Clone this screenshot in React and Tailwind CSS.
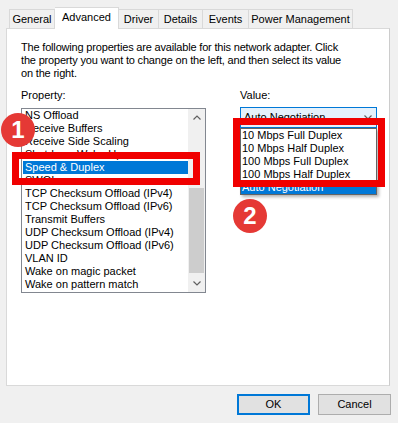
const props = [
  "NS Offload",
  "Receive Buffers",
  "Receive Side Scaling",
  "Shutdown Wake-Up",
  "Speed & Duplex",
  "SWOI",
  "TCP Checksum Offload (IPv4)",
  "TCP Checksum Offload (IPv6)",
  "Transmit Buffers",
  "UDP Checksum Offload (IPv4)",
  "UDP Checksum Offload (IPv6)",
  "VLAN ID",
  "Wake on magic packet",
  "Wake on pattern match",
];

const vals = [
  "10 Mbps Full Duplex",
  "10 Mbps Half Duplex",
  "100 Mbps Full Duplex",
  "100 Mbps Half Duplex",
  "Auto Negotiation",
];

function Chevron({ up }) {
  return (
    <svg width="8" height="5" viewBox="0 0 8 5">
      <path
        d={up ? "M0.5 4.5 L4 1 L7.5 4.5" : "M0.5 0.5 L4 4 L7.5 0.5"}
        fill="none"
        stroke="#606060"
        strokeWidth="1.2"
      />
    </svg>
  );
}

function Tab({ w, children }) {
  return (
    <div
      className={`${w} h-[19px] border-t border-r border-[#d9d9d9] bg-[#f0f0f0] flex items-center justify-center leading-none`}
    >
      {children}
    </div>
  );
}

export default function App() {
  return (
    <div className="relative w-[398px] h-[423px] overflow-hidden bg-[#f0f0f0] text-[11px] text-black font-['Liberation_Sans',Arial,sans-serif]">
      {/* tabs */}
      <div className="relative z-10 flex items-end h-[28px] pl-[9px]">
        <div className="w-[46px] h-[19px] border-t border-l border-r border-[#d9d9d9] bg-[#f0f0f0] flex items-center justify-center leading-none">
          General
        </div>
        <div className="w-[64px] h-[22px] -mb-px bg-white border-t border-r border-[#d9d9d9] flex items-center justify-center leading-none pb-[2px]">
          Advanced
        </div>
        <Tab w="w-[40px]">Driver</Tab>
        <Tab w="w-[44px]">Details</Tab>
        <Tab w="w-[46px]">Events</Tab>
        <Tab w="w-[104px]">Power Management</Tab>
      </div>

      {/* panel */}
      <div className="ml-[6px] w-[384px] h-[358px] bg-white border border-[#d9d9d9] border-r-[#cccccc] pl-[14px] pt-[12px]">
        <p className="leading-[13px] whitespace-nowrap tracking-[-0.18px]">
          The following properties are available for this network adapter. Click
          <br />
          the property you want to change on the left, and then select its value
          <br />
          on the right.
        </p>

        <div className="flex mt-[9px]">
          {/* left column */}
          <div className="w-[185px]">
            <div className="leading-[13px]">Property:</div>
            <div className="mt-[6px] h-[185px] border border-[#828790] flex">
              <div className="flex-1 flex flex-col">
                {props.map((p) => (
                  <div
                    key={p}
                    className={`h-[13px] leading-[13px] ml-px pl-[2px] whitespace-nowrap overflow-hidden ${
                      p === "Speed & Duplex" ? "bg-[#0078d7] text-white" : ""
                    }`}
                  >
                    {p}
                  </div>
                ))}
              </div>
              <div className="w-[17px] flex flex-col bg-[#f0f0f0]">
                <div className="h-[17px] flex items-center justify-center">
                  <Chevron up />
                </div>
                <div className="flex-1 flex flex-col justify-end pb-[2px] px-px">
                  <div className="h-[85px] bg-[#cdcdcd]" />
                </div>
                <div className="h-[17px] flex items-center justify-center">
                  <Chevron />
                </div>
              </div>
            </div>
          </div>

          {/* right column */}
          <div className="relative ml-[34px] w-[137px]">
            <div className="leading-[13px]">Value:</div>
            <div className="mt-[5px] h-[21px] border border-[#0078d7] bg-[#e5f1fb] flex items-center justify-between pl-[3px] pr-[4px]">
              <span>Auto Negotiation</span>
              <Chevron />
            </div>
            <div className="absolute left-0 top-[39px] w-[137px] bg-white border border-[#646464] shadow-[2px_2px_3px_rgba(0,0,0,0.3)]">
              {vals.map((v) => (
                <div
                  key={v}
                  className={`h-[13px] leading-[13px] pl-px whitespace-nowrap ${
                    v === "Auto Negotiation" ? "bg-[#0078d7] text-white" : ""
                  }`}
                >
                  {v}
                </div>
              ))}
            </div>
          </div>
        </div>
      </div>

      {/* buttons */}
      <div className="flex justify-end gap-[8px] pr-[7px] mt-[8px]">
        <button className="w-[73px] h-[21px] bg-[#e1e1e1] border-2 border-[#0078d7] leading-none">
          OK
        </button>
        <button className="w-[73px] h-[21px] bg-[#e1e1e1] border border-[#adadad] leading-none">
          Cancel
        </button>
      </div>

      {/* annotations */}
      <div className="absolute left-[12px] top-[152px] w-[188px] h-[33px] border-[7px] border-[#f00000] z-20" />
      <div className="absolute left-[233px] top-[118px] w-[152px] h-[69px] border-[7px] border-[#f00000] z-20" />
      <div className="absolute left-[1px] top-[113px] w-[34px] h-[34px] rounded-full bg-[#e53935] text-white font-bold text-[24px] flex items-center justify-center z-30">
        1
      </div>
      <div className="absolute left-[233px] top-[199px] w-[34px] h-[34px] rounded-full bg-[#e53935] text-white font-bold text-[24px] flex items-center justify-center z-30">
        2
      </div>
    </div>
  );
}
